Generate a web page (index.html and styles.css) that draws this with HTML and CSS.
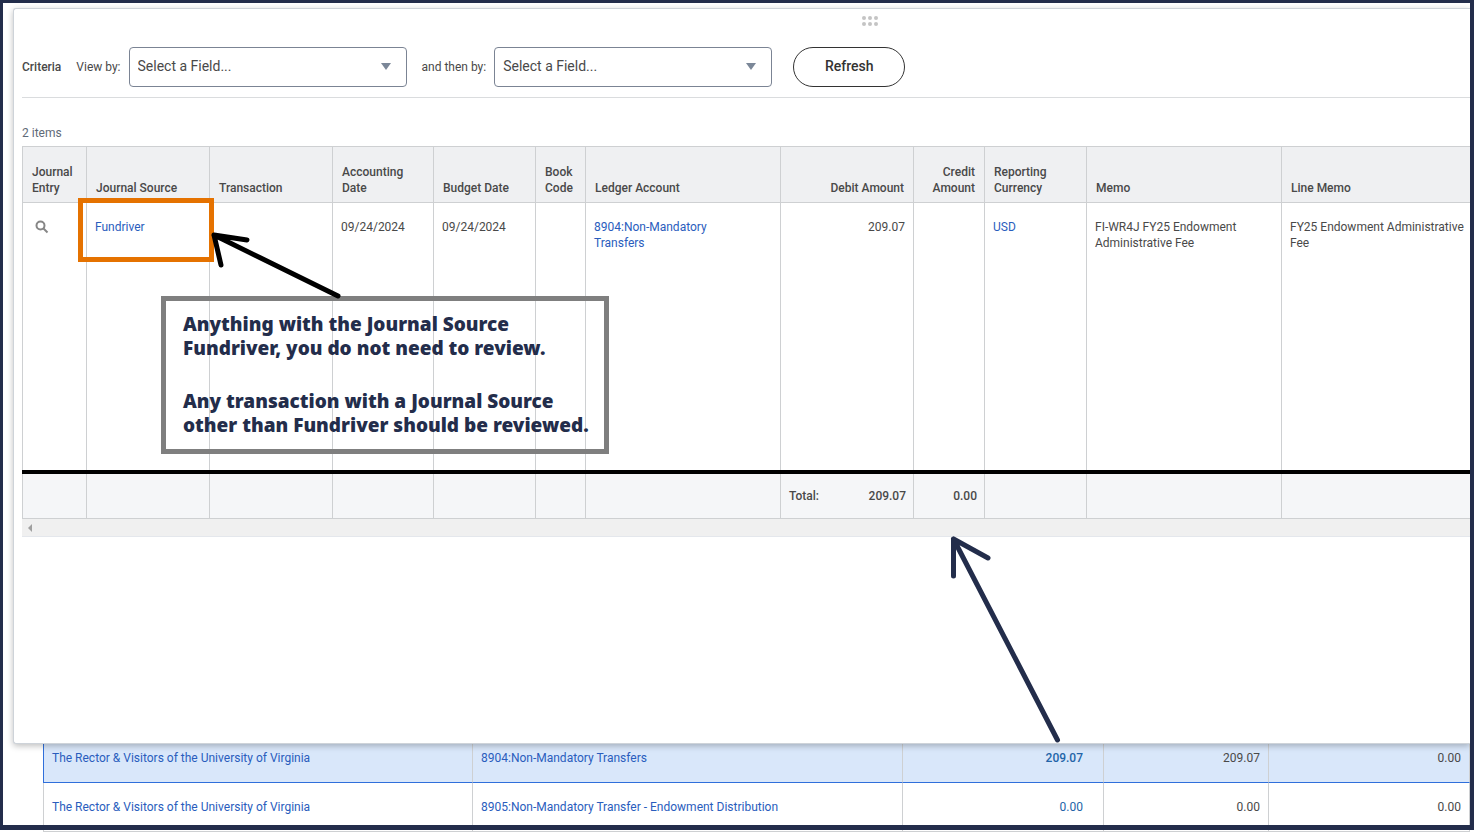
FILE: index.html
```html
<!DOCTYPE html>
<html lang="en">
<head>
<meta charset="utf-8">
<title>Journal lines</title>
<link rel="stylesheet" href="styles.css">
</head>
<body>
<div class="page">
  <section class="panel">
    <svg class="handle" width="16" height="10" viewBox="0 0 16 10" aria-hidden="true">
      <circle cx="2" cy="2" r="2"/><circle cx="8" cy="2" r="2"/><circle cx="14" cy="2" r="2"/>
      <circle cx="2" cy="8" r="2"/><circle cx="8" cy="8" r="2"/><circle cx="14" cy="8" r="2"/>
    </svg>
    <form class="criteria">
      <strong class="criteria-title">Criteria</strong>
      <div class="field">
        <label for="view-by">View by:</label>
        <span class="picker">
          <select id="view-by"><option>Select a Field...</option></select>
          <svg class="caret" width="10" height="7" viewBox="0 0 10 7" aria-hidden="true"><path d="M0 0h10L5 7z"/></svg>
        </span>
      </div>
      <div class="field">
        <label for="then-by">and then by:</label>
        <span class="picker">
          <select id="then-by"><option>Select a Field...</option></select>
          <svg class="caret" width="10" height="7" viewBox="0 0 10 7" aria-hidden="true"><path d="M0 0h10L5 7z"/></svg>
        </span>
      </div>
      <button class="refresh" type="button">Refresh</button>
    </form>
    <p class="count">2 items</p>
    <table class="journal">
      <colgroup>
        <col class="w-entry"><col class="w-source"><col class="w-source"><col class="w-acct"><col class="w-date"><col class="w-book">
        <col class="w-wide"><col class="w-debit"><col class="w-credit"><col class="w-date"><col class="w-wide"><col>
      </colgroup>
      <thead>
        <tr>
          <th>Journal Entry</th><th>Journal Source</th><th>Transaction</th><th>Accounting Date</th><th>Budget Date</th><th>Book Code</th>
          <th>Ledger Account</th><th class="num">Debit Amount</th><th class="num">Credit Amount</th><th>Reporting Currency</th><th>Memo</th><th>Line Memo</th>
        </tr>
      </thead>
      <tbody>
        <tr>
          <td><button class="lookup" type="button" aria-label="View journal entry"><svg width="14" height="14" viewBox="0 0 14 14" aria-hidden="true"><circle cx="5.5" cy="5.5" r="4"/><path d="M8.5 8.5l4 4"/></svg></button></td>
          <td><a href="#">Fundriver</a></td>
          <td></td>
          <td>09/24/2024</td>
          <td>09/24/2024</td>
          <td></td>
          <td class="roomy"><a href="#">8904:Non-Mandatory Transfers</a></td>
          <td class="num">209.07</td>
          <td></td>
          <td><a href="#">USD</a></td>
          <td>FI-WR4J FY25 Endowment Administrative Fee</td>
          <td>FY25 Endowment Administrative Fee</td>
        </tr>
      </tbody>
      <tfoot>
        <tr class="rule"><td colspan="12"></td></tr>
        <tr>
          <td></td><td></td><td></td><td></td><td></td><td></td><td></td>
          <td><div class="total"><span>Total:</span><span>209.07</span></div></td>
          <td class="num">0.00</td>
          <td></td><td></td><td></td>
        </tr>
      </tfoot>
    </table>
    <div class="scrollbar"><svg width="4" height="8" viewBox="0 0 4 8" aria-hidden="true"><path d="M4 0v8L0 4z"/></svg></div>
  </section>

  <table class="ledger">
    <colgroup><col class="w-company"><col class="w-account"><col class="w-amount"><col class="w-period"><col></colgroup>
    <tbody>
      <tr class="selected">
        <td><a href="#">The Rector &amp; Visitors of the University of Virginia</a></td>
        <td><a href="#">8904:Non-Mandatory Transfers</a></td>
        <td class="num drill"><a class="current" href="#">209.07</a></td>
        <td class="num">209.07</td>
        <td class="num">0.00</td>
      </tr>
      <tr>
        <td><a href="#">The Rector &amp; Visitors of the University of Virginia</a></td>
        <td><a href="#">8905:Non-Mandatory Transfer - Endowment Distribution</a></td>
        <td class="num drill"><a href="#">0.00</a></td>
        <td class="num">0.00</td>
        <td class="num">0.00</td>
      </tr>
    </tbody>
  </table>

  <div class="highlight"></div>
  <aside class="note">
    <p>Anything with the Journal Source<br>Fundriver, you do not need to review.</p>
    <p>Any transaction with a Journal Source<br>other than Fundriver should be reviewed.</p>
  </aside>
  <svg class="arrow arrow-source" width="136" height="72" viewBox="0 0 136 72" aria-hidden="true"><path d="M127 64L3 3L36 8M3 3L10 33"/></svg>
  <svg class="arrow arrow-total" width="116" height="212" viewBox="0 0 116 212" aria-hidden="true"><path d="M108.500 205L4.500 4L39 23M4.500 4V41"/></svg>
  <div class="frame"></div>
</div>
</body>
</html>
```
FILE: styles.css
```css
* { box-sizing: border-box; }

body {
  margin: 0;
  background: #fff;
  color: #494949;
  font: 12px/16px Roboto, "Liberation Sans", sans-serif;
  overflow: hidden;
}

a { color: #2a5dbd; text-decoration: none; }
p { margin: 0; }

.page {
  position: relative;
  min-height: 100vh;
  padding: 8px 4px 0 13px;
}

.frame {
  position: absolute;
  z-index: 3;
  inset: 0 0 2px 0;
  border: 3px solid #232d4b;
  border-right-width: 4px;
  border-bottom-width: 5px;
  pointer-events: none;
}

.panel {
  position: relative;
  z-index: 1;
  min-height: calc(100vh - 96px);
  padding: 7px 0 0 8px;
  border: 1px solid #ced3d9;
  border-right: 0;
  border-radius: 3px 0 0 3px;
  background: #fff;
  box-shadow: 0 2px 6px rgba(0, 0, 0, 0.25);
}

.handle { display: block; margin-left: 840px; fill: #c4c4c4; }

.criteria {
  display: flex;
  align-items: center;
  padding: 21px 0 10px;
  border-bottom: 1px solid #dadcde;
}
.criteria-title { font-weight: 500; margin-right: 15px; }
.field { display: flex; align-items: center; gap: 8px; margin-right: 15px; }
.picker { position: relative; display: block; }
.picker select {
  display: block;
  appearance: none;
  width: 278px;
  height: 40px;
  padding: 0 32px 2px 8px;
  border: 1px solid #7b8494;
  border-radius: 4px;
  background: #fff;
  color: #494949;
  font: inherit;
  font-size: 14px;
}
.caret { position: absolute; right: 16px; top: 16px; fill: #7b8798; pointer-events: none; }
.refresh {
  width: 112px;
  height: 40px;
  margin-left: 6px;
  padding: 0 0 2px;
  border: 1px solid #333;
  border-radius: 20px;
  background: #fff;
  color: #333;
  font: inherit;
  font-size: 14px;
  font-weight: 500;
}

.count { padding: 27px 0 5px; color: #5f6a78; }

table { width: 100%; table-layout: fixed; border-spacing: 0; }
th, td { text-align: left; border-left: 1px solid #ced0d2; }
.num { text-align: right; }

.w-entry { width: 64px; }
.w-source { width: 123px; }
.w-acct { width: 101px; }
.w-date { width: 102px; }
.w-book { width: 50px; }
.w-wide { width: 195px; }
.w-debit { width: 133px; }
.w-credit { width: 71px; }

.journal th {
  height: 57px;
  padding: 0 9px 6px;
  vertical-align: bottom;
  font-weight: 500;
  background: #eff0f2;
  border-top: 1px solid #ced0d2;
  border-bottom: 1px solid #ced0d2;
}
.journal td { height: 267px; padding: 16px 6px 16px 8px; vertical-align: top; }
.journal td.num { padding-right: 8px; }
.journal td.roomy { padding-right: 32px; }
.journal tfoot td {
  height: 45px;
  padding: 14px 7px 14px 8px;
  font-weight: 500;
  background: #f5f6f8;
  border-bottom: 1px solid #ced0d2;
}
.journal tfoot td.num { padding-right: 7px; }
.journal tfoot .rule td { height: 4px; padding: 0; border: 0; background: #000; }
.total { display: flex; justify-content: space-between; }

.lookup { display: block; padding: 1px 4px; border: 0; background: none; }
.lookup svg { display: block; fill: none; stroke: #868686; stroke-width: 2; }

.scrollbar {
  display: flex;
  align-items: center;
  height: 18px;
  padding-left: 6px;
  background: #f0f0f0;
  border-bottom: 1px solid #e4e7ec;
}
.scrollbar svg { fill: #a0a0a0; }

.ledger { width: calc(100% - 30px); margin: -10px 0 0 30px; }
.w-company { width: 429px; }
.w-account { width: 430px; }
.w-amount { width: 201px; }
.w-period { width: 165px; }
.ledger td { height: 49px; padding: 0 8px; border-bottom: 1px solid #ced0d2; }
.ledger td:last-child { border-right: 1px solid #ced0d2; }
.ledger td.drill { padding-right: 20px; }
.ledger .selected td { background: #d9e7fa; border-bottom-color: #2f6fdb; }
.ledger .selected td:first-child { border-left-color: #2f6fdb; }
.drill a { color: #2364a8; }
.drill .current { font-weight: 500; }

.highlight, .note, .arrow { position: absolute; z-index: 2; pointer-events: none; }
.highlight { left: 78px; top: 198px; width: 136px; height: 64px; border: 5px solid #e57200; }
.note {
  left: 161px;
  top: 296px;
  width: 448px;
  height: 158px;
  padding: 11px 0 0 17px;
  border: 5px solid #7f7f7f;
  color: #232d4b;
  font: 900 19px/24px "Franklin Gothic Heavy", "Noto Sans", "Open Sans", sans-serif;
  white-space: nowrap;
}
.note p + p { margin-top: 29px; }
.arrow { fill: none; stroke-width: 5; stroke-linecap: round; stroke-linejoin: round; }
.arrow-source { left: 211px; top: 232px; stroke: #000; }
.arrow-total { left: 949px; top: 535px; stroke: #232d4b; }
```
